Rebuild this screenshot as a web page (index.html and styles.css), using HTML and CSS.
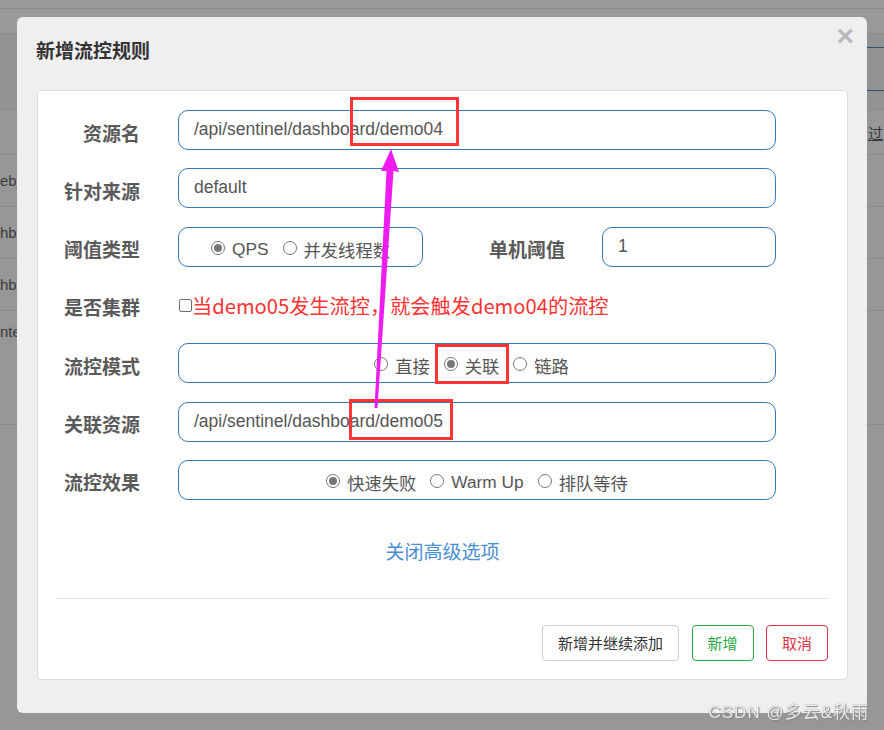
FILE: index.html
```html
<!DOCTYPE html>
<html lang="zh">
<head>
<meta charset="utf-8">
<title>新增流控规则</title>
<link rel="stylesheet" href="styles.css">
</head>
<body>
<div class="page">
  <div class="topbar"></div>
  <div class="subbar"></div>
  <div class="tabs"><div class="tabs-right"></div></div>
  <div class="thead"><span class="th-right">过</span></div>
  <div class="trow"><span class="cell">eb_d</span></div>
  <div class="trow"><span class="cell">hbo</span></div>
  <div class="trow"><span class="cell">hbo</span></div>
  <div class="trow tall"><span class="cell">nte</span></div>
</div>

<div class="modal">
  <div class="modal-header">
    <h4 class="title">新增流控规则</h4>
    <span class="close">×</span>
  </div>
  <div class="card">
    <div class="form">
      <div class="row">
        <label class="lbl">资源名</label>
        <div class="field input">/api/sentinel/dashboard/demo04</div>
      </div>
      <div class="row">
        <label class="lbl">针对来源</label>
        <div class="field input">default</div>
      </div>
      <div class="row">
        <label class="lbl">阈值类型</label>
        <div class="field radios narrow">
          <span class="opt"><span class="radio checked"></span>QPS</span>
          <span class="opt"><span class="radio"></span>并发线程数</span>
        </div>
        <label class="lbl lbl2">单机阈值</label>
        <div class="field input small">1</div>
      </div>
      <div class="row">
        <label class="lbl">是否集群</label>
        <div class="check-wrap"><span class="checkbox"></span><span class="note">当demo05发生流控，就会触发demo04的流控</span></div>
      </div>
      <div class="row">
        <label class="lbl">流控模式</label>
        <div class="field radios mode">
          <span class="opt"><span class="radio"></span>直接</span>
          <span class="opt"><span class="radio checked"></span>关联</span>
          <span class="opt"><span class="radio"></span>链路</span>
        </div>
      </div>
      <div class="row">
        <label class="lbl">关联资源</label>
        <div class="field input">/api/sentinel/dashboard/demo05</div>
      </div>
      <div class="row">
        <label class="lbl">流控效果</label>
        <div class="field radios">
          <span class="opt"><span class="radio checked"></span>快速失败</span>
          <span class="opt"><span class="radio"></span>Warm Up</span>
          <span class="opt"><span class="radio"></span>排队等待</span>
        </div>
      </div>
    </div>
    <div class="link-row"><a class="link">关闭高级选项</a></div>
    <div class="divider"></div>
    <div class="footer">
      <button class="btn btn-default">新增并继续添加</button>
      <button class="btn btn-ok">新增</button>
      <button class="btn btn-cancel">取消</button>
    </div>
  </div>
</div>

<div class="mark mark1"></div>
<div class="mark mark2"></div>
<div class="mark mark3"></div>

<svg class="arrow" width="884" height="730" viewBox="0 0 884 730">
  <polygon points="391,149 399,172 393.5,171 377.5,408 374.5,408 386.5,171 381,171" fill="#ee1cee"/>
</svg>

<div class="watermark">CSDN @多云&amp;秋雨</div>
</body>
</html>
```

FILE: styles.css
```css
* { box-sizing: border-box; }

html, body {
  margin: 0;
  padding: 0;
  width: 884px;
  height: 730px;
  overflow: hidden;
}

body {
  background: #979797;
  font-family: "Liberation Sans", "Noto Sans CJK SC", sans-serif;
  position: relative;
}

/* background page (under the dim overlay) */
.page {
  width: 884px;
  color: #3c3c3c;
  font-size: 14px;
}
.topbar {
  height: 9px;
  border-bottom: 1px solid #888;
  background: #9a9a9a;
}
.subbar {
  height: 25px;
  border-bottom: 1px solid #8c8c8c;
  background: #999;
}
.tabs {
  height: 76px;
  border-bottom: 1px solid #8c8c8c;
  background: #939393;
  display: flex;
  justify-content: flex-end;
  align-items: flex-start;
}
.tabs-right {
  width: 20px;
  height: 44px;
  margin-top: 13px;
  border-top: 1px solid #2f5070;
  border-bottom: 1px solid #2f5070;
}
.thead {
  height: 45px;
  border-bottom: 1px solid #8c8c8c;
  background: #979797;
  display: flex;
  justify-content: flex-end;
  align-items: center;
}
.th-right {
  width: 16px;
  font-size: 15px;
  color: #3a3a3a;
  text-decoration: underline;
  font-family: "Noto Sans CJK SC", sans-serif;
}
.trow {
  height: 52px;
  border-bottom: 1px solid #8c8c8c;
  display: flex;
  align-items: center;
}
.trow.tall { height: 114px; align-items: flex-start; padding-top: 12px; }
.cell { font-size: 15px; }

/* modal */
.modal {
  position: fixed;
  left: 17px;
  top: 17px;
  width: 850px;
  height: 696px;
  background: #efefef;
  border-radius: 6px;
  padding: 0 19px 33px 20px;
  display: flex;
  flex-direction: column;
}
.modal-header {
  height: 73px;
  display: flex;
  justify-content: space-between;
  align-items: flex-start;
  margin-left: -1px;
  margin-right: -6px;
}
.title {
  margin: 0;
  padding-top: 20px;
  font-family: "Noto Sans CJK SC", sans-serif;
  font-size: 19px;
  line-height: 26px;
  font-weight: 700;
  color: #333;
}
.close {
  margin-top: 9px;
  font-family: "Liberation Sans", sans-serif;
  font-size: 30px;
  line-height: 20px;
  font-weight: 700;
  color: #b9b9b9;
}

.card {
  flex: 1;
  background: #fff;
  border: 1px solid #dcdcdc;
  border-radius: 4px;
  padding: 19px 0 18px 0;
  display: flex;
  flex-direction: column;
}

.form {
  display: flex;
  flex-direction: column;
  gap: 18.33px;
}
.row {
  display: flex;
  align-items: center;
  height: 40px;
}
.lbl {
  width: 102px;
  margin-right: 38px;
  text-align: right;
  font-family: "Noto Sans CJK SC", sans-serif;
  font-size: 19px;
  font-weight: 700;
  color: #5a5a5a;
  padding-top: 4px;
}
.lbl2 {
  width: 142px;
  margin-right: 37px;
}

.field {
  height: 40px;
  border: 1px solid #3677b8;
  border-radius: 10px;
  color: #555;
}
.input {
  width: 598px;
  padding-left: 15px;
  display: flex;
  align-items: center;
  font-size: 17.5px;
  padding-bottom: 1px;
}
.input.small { width: 174px; }

.radios {
  width: 598px;
  display: flex;
  justify-content: center;
  align-items: center;
  gap: 14px;
  font-family: "Liberation Sans", "Noto Sans CJK SC", sans-serif;
  font-size: 17.3px;
  padding-top: 5px;
}
.radios.narrow { width: 245px; }
.radios.mode { padding-right: 11px; }
.opt {
  display: flex;
  align-items: center;
  gap: 7px;
}
.radio {
  width: 14px;
  height: 14px;
  border: 1px solid #777;
  border-radius: 50%;
  display: flex;
  align-items: center;
  justify-content: center;
  margin-top: -3px;
}
.radio.checked::after {
  content: "";
  width: 8px;
  height: 8px;
  border-radius: 50%;
  background: #777;
}

.check-wrap {
  display: flex;
  align-items: center;
  padding-left: 1px;
}
.checkbox {
  width: 13px;
  height: 13px;
  border: 1px solid #6f6f6f;
  border-radius: 2px;
  margin-top: 2px;
}
.note {
  font-family: "Noto Sans CJK SC", sans-serif;
  font-size: 20.2px;
  color: #ff3333;
  line-height: 26px;
  padding-top: 3px;
}

.link-row {
  margin-top: 38px;
  text-align: center;
}
.link {
  font-family: "Noto Sans CJK SC", sans-serif;
  font-size: 19px;
  line-height: 26px;
  color: #4a8ed3;
  cursor: pointer;
}

.divider {
  margin: 34px 19px 0 18px;
  border-top: 1px solid #e3e3e3;
}

.footer {
  margin-top: 26px;
  padding-right: 19px;
  display: flex;
  justify-content: flex-end;
  gap: 12.5px;
}
.btn {
  height: 36px;
  padding: 0 14px;
  background: #fff;
  border-radius: 4px;
  font-family: "Noto Sans CJK SC", sans-serif;
  font-size: 15px;
  line-height: 34px;
}
.btn-default { width: 137px; border: 1px solid #ccc; color: #333; }
.btn-ok { width: 62px; border: 1px solid #28a745; color: #28a745; }
.btn-cancel { width: 62px; border: 1px solid #dc3545; color: #dc3545; }

/* annotations */
.mark {
  position: absolute;
  border: 3px solid #ff3535;
}
.mark1 { left: 350px; top: 97px; width: 109px; height: 49px; }
.mark2 { left: 435px; top: 344px; width: 74px; height: 40px; }
.mark3 { left: 349px; top: 399px; width: 104px; height: 41px; }

.arrow {
  position: absolute;
  left: 0;
  top: 0;
  pointer-events: none;
}

.watermark {
  position: absolute;
  right: 15px;
  bottom: 7px;
  font-family: "Liberation Sans", "Noto Sans CJK SC", sans-serif;
  font-size: 17px;
  color: rgba(255, 255, 255, 0.85);
  text-shadow: 0 0 1px #777, 1px 1px 1px #888;
  letter-spacing: 1px;
}
```
